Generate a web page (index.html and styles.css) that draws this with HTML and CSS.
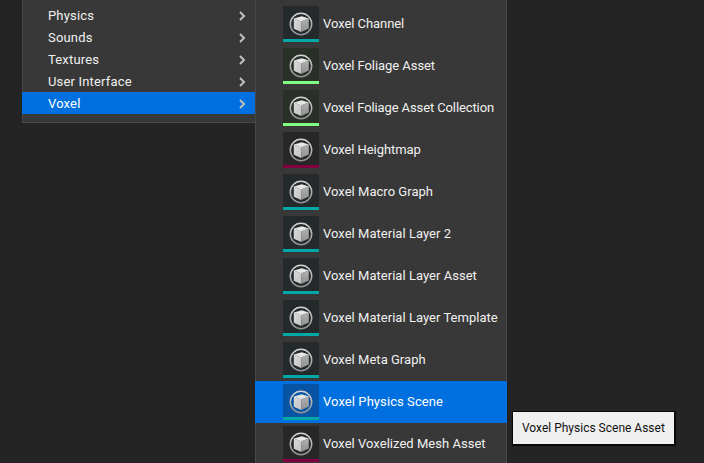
FILE: index.html
```
<!DOCTYPE html>
<html lang="en">
<head>
<meta charset="utf-8">
<title>Asset menu</title>
<link rel="stylesheet" href="styles.css">
</head>
<body>
<svg class="defs" width="0" height="0">
  <defs>
    <linearGradient id="ring-fill" x1="0" y1="0" x2="0" y2="1"><stop offset="0" stop-color="#d4d4d4"/><stop offset="1" stop-color="#929292"/></linearGradient>
    <linearGradient id="left-face" x1="0" y1="0" x2="1" y2="1"><stop offset="0" stop-color="#d8d8d8"/><stop offset="1" stop-color="#c4c4c4"/></linearGradient>
    <linearGradient id="right-face" x1="0" y1="0" x2="0" y2="1"><stop offset="0" stop-color="#b0b0b0"/><stop offset="1" stop-color="#929292"/></linearGradient>
  </defs>
  <symbol id="cube" viewBox="0 0 36 36">
    <circle cx="18" cy="18" r="10.7" fill="none" stroke="url(#ring-fill)" stroke-width="1.5"/>
    <path d="M10.8 12.6 18.8 10.2 25.8 12.4 18.2 15.4Z" fill="#e6e6e6"/>
    <path d="M10.8 12.6 18.2 15.2V25.9L10.8 22.8Z" fill="url(#left-face)"/>
    <path d="M18.2 15.2 25.8 12.4V22.4L18.2 25.9Z" fill="url(#right-face)"/>
  </symbol>
  <symbol id="chevron" viewBox="0 0 8 10">
    <path d="M1 1 5 5 1 9" fill="none" stroke="#c0c0c0" stroke-width="2"/>
  </symbol>
</svg>
<main class="screen">
  <nav class="menu categories">
    <div class="category">Physics<svg class="chevron"><use href="#chevron"/></svg></div>
    <div class="category">Sounds<svg class="chevron"><use href="#chevron"/></svg></div>
    <div class="category">Textures<svg class="chevron"><use href="#chevron"/></svg></div>
    <div class="category">User Interface<svg class="chevron"><use href="#chevron"/></svg></div>
    <div class="category selected">Voxel<svg class="chevron"><use href="#chevron"/></svg></div>
  </nav>
  <nav class="menu assets">
    <div class="asset teal tight"><svg class="thumb"><use href="#cube"/></svg>Voxel Channel</div>
    <div class="asset green tight"><svg class="thumb"><use href="#cube"/></svg>Voxel Foliage Asset</div>
    <div class="asset green tighter"><svg class="thumb"><use href="#cube"/></svg>Voxel Foliage Asset Collection</div>
    <div class="asset maroon tight"><svg class="thumb"><use href="#cube"/></svg>Voxel Heightmap</div>
    <div class="asset teal"><svg class="thumb"><use href="#cube"/></svg>Voxel Macro Graph</div>
    <div class="asset teal"><svg class="thumb"><use href="#cube"/></svg>Voxel Material Layer 2</div>
    <div class="asset teal"><svg class="thumb"><use href="#cube"/></svg>Voxel Material Layer Asset</div>
    <div class="asset teal"><svg class="thumb"><use href="#cube"/></svg>Voxel Material Layer Template</div>
    <div class="asset teal"><svg class="thumb"><use href="#cube"/></svg>Voxel Meta Graph</div>
    <div class="asset teal selected"><svg class="thumb"><use href="#cube"/></svg>Voxel Physics Scene</div>
    <div class="asset maroon"><svg class="thumb"><use href="#cube"/></svg>Voxel Voxelized Mesh Asset</div>
  </nav>
  <div class="tooltip">Voxel Physics Scene Asset</div>
</main>
</body>
</html>
```
FILE: styles.css
```
* { box-sizing: border-box; }
body {
  margin: 0;
  background: #242424;
  color: #f0f0f0;
  font: 13px/22px Roboto, "Liberation Sans", sans-serif;
  letter-spacing: 0.17px;
}
.defs { position: absolute; }
.screen {
  position: relative;
  display: flex;
  align-items: flex-start;
  width: 704px;
  height: 463px;
  padding-left: 22px;
  overflow: hidden;
}
.menu { background: #383838; white-space: nowrap; }
.categories {
  width: 233px;
  height: 123px;
  padding-top: 4px;
  border-left: 1px solid #484848;
  border-bottom: 1px solid #484848;
}
.category {
  display: flex;
  align-items: center;
  justify-content: space-between;
  height: 22px;
  margin-left: -1px;
  padding: 1px 8px 0 26px;
}
.selected { background: #0070e0; color: #fff; }
.chevron { width: 8px; height: 10px; }
.assets {
  width: 252px;
  height: 463px;
  padding-top: 3px;
  border-left: 1px solid #484848;
  border-right: 1px solid #484848;
}
.asset {
  display: flex;
  align-items: center;
  gap: 4px;
  height: 42px;
  margin: 0 -1px;
  padding-left: 28px;
  letter-spacing: 0.03px;
}
.asset.tight { letter-spacing: -0.06px; }
.asset.tighter { letter-spacing: -0.11px; }
.asset.selected { letter-spacing: 0.08px; }
.thumb {
  width: 36px;
  height: 36px;
  background: var(--tint);
  box-shadow: inset 0 -3px var(--stripe);
}
.teal { --tint: #242a2c; --stripe: #00a8a8; }
.green { --tint: #283028; --stripe: #80ff80; }
.maroon { --tint: #282628; --stripe: #800040; }
.teal.selected { --tint: #0854a4; }
.tooltip {
  position: absolute;
  left: 512px;
  top: 411px;
  width: 164px;
  height: 35px;
  padding-left: 9px;
  border: solid #080808;
  border-width: 1px 2px 2px 1px;
  background: #f0f0f0;
  color: #101010;
  font-size: 12px;
  line-height: 32px;
  letter-spacing: 0;
  white-space: nowrap;
}
```
